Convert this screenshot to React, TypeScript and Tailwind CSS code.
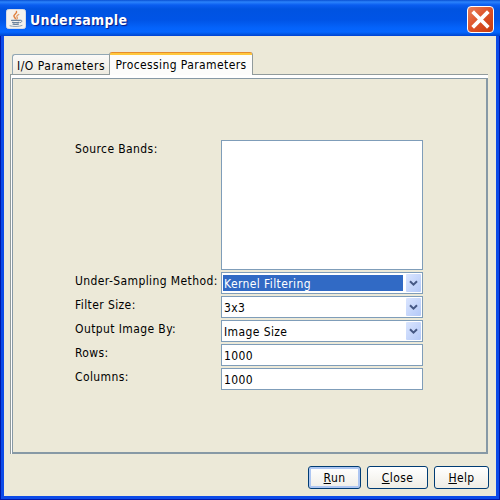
import type { ReactNode } from "react";

function JavaIcon() {
  return (
    <svg width="20" height="20" viewBox="0 0 20 20" className="block">
      <rect x="0.5" y="0.5" width="19" height="19" rx="2" fill="#f4f2ee" stroke="#d5dbe6" />
      <g fill="none" strokeLinecap="round">
        <path d="M10.5 2.5c1 2-3.500 3-2.500 5 .4.9 1.300 1.200 1.300 2.300" stroke="#e0803e" strokeWidth="1.500" />
        <path d="M12.800 5.500c-2 1-2.600 2-1.600 3 .5.600 0 1.300-.6 1.700" stroke="#e39a64" strokeWidth="1.200" />
        <path d="M5.500 11.300h8.500M6.500 13.300c2 .5 4.500.5 6.500 0M7 15.100c1.600.5 3.800.5 5.500 0" stroke="#6d849c" strokeWidth="1.200" />
        <path d="M14 11.300c2.600-.8 2.600 1.800.2 2.400" stroke="#6d849c" />
        <path d="M4 16.800c3 1 9 1 12-.3" stroke="#8da0b4" />
      </g>
    </svg>
  );
}

function Arrow() {
  return (
    <span className="flex h-[18px] w-[15px] items-center justify-center rounded-[1px] bg-linear-to-br from-[#dae5fe] to-[#b4c9f8]">
      <svg width="9" height="7" viewBox="0 0 9 7" className="block">
        <path d="M1 1.200L4.500 4.700L8 1.200" fill="none" stroke="#465985" strokeWidth="2" />
      </svg>
    </span>
  );
}

function Combo({ children, selected = false }: { children: ReactNode; selected?: boolean }) {
  return (
    <div className="flex h-[22px] w-[202px] items-center justify-between border border-[#7f9db9] bg-white pr-px pl-px">
      <span
        className={
          selected
            ? "flex h-4 w-[180px] items-center bg-[#316ac5] pl-px text-white"
            : "flex h-4 w-[180px] items-center pl-px"
        }
      >
        <span className="relative top-px">{children}</span>
      </span>
      <Arrow />
    </div>
  );
}

function TextField({ value }: { value: string }) {
  return (
    <div className="flex h-[22px] w-[202px] items-center border border-[#7f9db9] bg-white pl-[2px]">
      <span className="relative top-px">{value}</span>
    </div>
  );
}

function Row({ label, children }: { label: ReactNode; children: ReactNode }) {
  return (
    <div className="flex items-start">
      <span className="w-[146px] shrink-0 pt-px whitespace-nowrap">{label}</span>
      {children}
    </div>
  );
}

export default function App() {
  return (
    <div className="flex h-[500px] w-[500px] flex-col overflow-hidden bg-[#0831d9] font-['DejaVu_Sans_Condensed','DejaVu_Sans',sans-serif] text-[12px] leading-4 tracking-[0.4px] text-black [font-stretch:condensed]">
      <header className="flex h-9 shrink-0 items-center justify-between bg-[linear-gradient(180deg,#0950d2_0,#2b83fb_2px,#0a5df0_5px,#0053e1_9px,#0054e6_20px,#0463fb_28px,#0566ff_32px,#004fd8_35px,#003dd7_36px)] pr-[6px] pl-[6px]">
        <div className="flex items-center pt-px">
          <JavaIcon />
          <h1 className="ml-[4px] pt-[2px] text-[14px] font-bold tracking-[0.3px] text-white [text-shadow:1px_1px_1px_#0a1883]">Undersample</h1>
        </div>
        <button className="mt-[3px] flex h-[27px] w-[27px] items-center justify-center rounded-[4px] border border-white bg-[linear-gradient(135deg,#e8805c,#dd5127_50%,#c63c10)]">
          <svg width="21" height="21" viewBox="0 0 21 21">
            <path d="M4 4L17 17M17 4L4 17" stroke="white" strokeWidth="3.800" strokeLinecap="square" />
          </svg>
        </button>
      </header>
      <div className="h-[464px] border-r border-b border-l border-[#0019a8] bg-[#0d4be8] px-[3px] pb-[3px]">
        <main className="flex h-[460px] flex-col bg-[#ece9d8]">
          <div className="mt-4 ml-2 flex h-[22px] items-end">
            <div className="flex h-5 w-[97px] items-center justify-center rounded-tl-[3px] border-t border-l border-[#91a7b4] bg-linear-to-b from-[#fbfaf8] to-[#eeebe0] pt-[3px]">
              <span className="tracking-[0.55px] whitespace-nowrap">I/O Parameters</span>
            </div>
            <div className="relative z-10 -mb-px flex h-[23px] w-[144px] flex-col rounded-t-[3px] border-r border-l border-[#919b9c] bg-[#fcfcfb]">
              <div className="h-[3px] rounded-t-[2px] border-t border-[#e68b2c] bg-[#ffc73c]" />
              <span className="mt-px pt-px text-center whitespace-nowrap">Processing Parameters</span>
            </div>
          </div>
          <section className="ml-[6px] h-[380px] w-[478px] shrink-0 border border-r-0 border-b-0 border-[#919b9c] bg-white pt-[3px] pl-px">
            <div className="h-[376px] w-[476px] border border-r-2 border-b-2 border-[#8799a5] bg-[#ece9d8]">
              <div className="flex flex-col gap-[2px] pt-[61px] pl-[62px]">
                <Row label="Source Bands:">
                  <div className="h-[130px] w-[202px] border border-[#7f9db9] bg-white" />
                </Row>
                <Row label="Under-Sampling Method:"><Combo selected>Kernel Filtering</Combo></Row>
                <Row label="Filter Size:"><Combo>3x3</Combo></Row>
                <Row label="Output Image By:"><Combo>Image Size</Combo></Row>
                <Row label="Rows:"><TextField value="1000" /></Row>
                <Row label="Columns:"><TextField value="1000" /></Row>
              </div>
            </div>
          </section>
          <footer className="mt-3 flex gap-[6px] pl-[304px]">
            <button className="h-[23px] w-[53px] rounded-[3px] border border-[#003c74] bg-linear-to-b from-white to-[#efeee8] shadow-[inset_0_0_0_2px_#adc6f2]"><u>R</u>un</button>
            <button className="h-[23px] w-[61px] rounded-[3px] border border-[#003c74] bg-linear-to-b from-white to-[#efede5]"><u>C</u>lose</button>
            <button className="h-[23px] w-[55px] rounded-[3px] border border-[#003c74] bg-linear-to-b from-white to-[#efede5]"><u>H</u>elp</button>
          </footer>
        </main>
      </div>
    </div>
  );
}
